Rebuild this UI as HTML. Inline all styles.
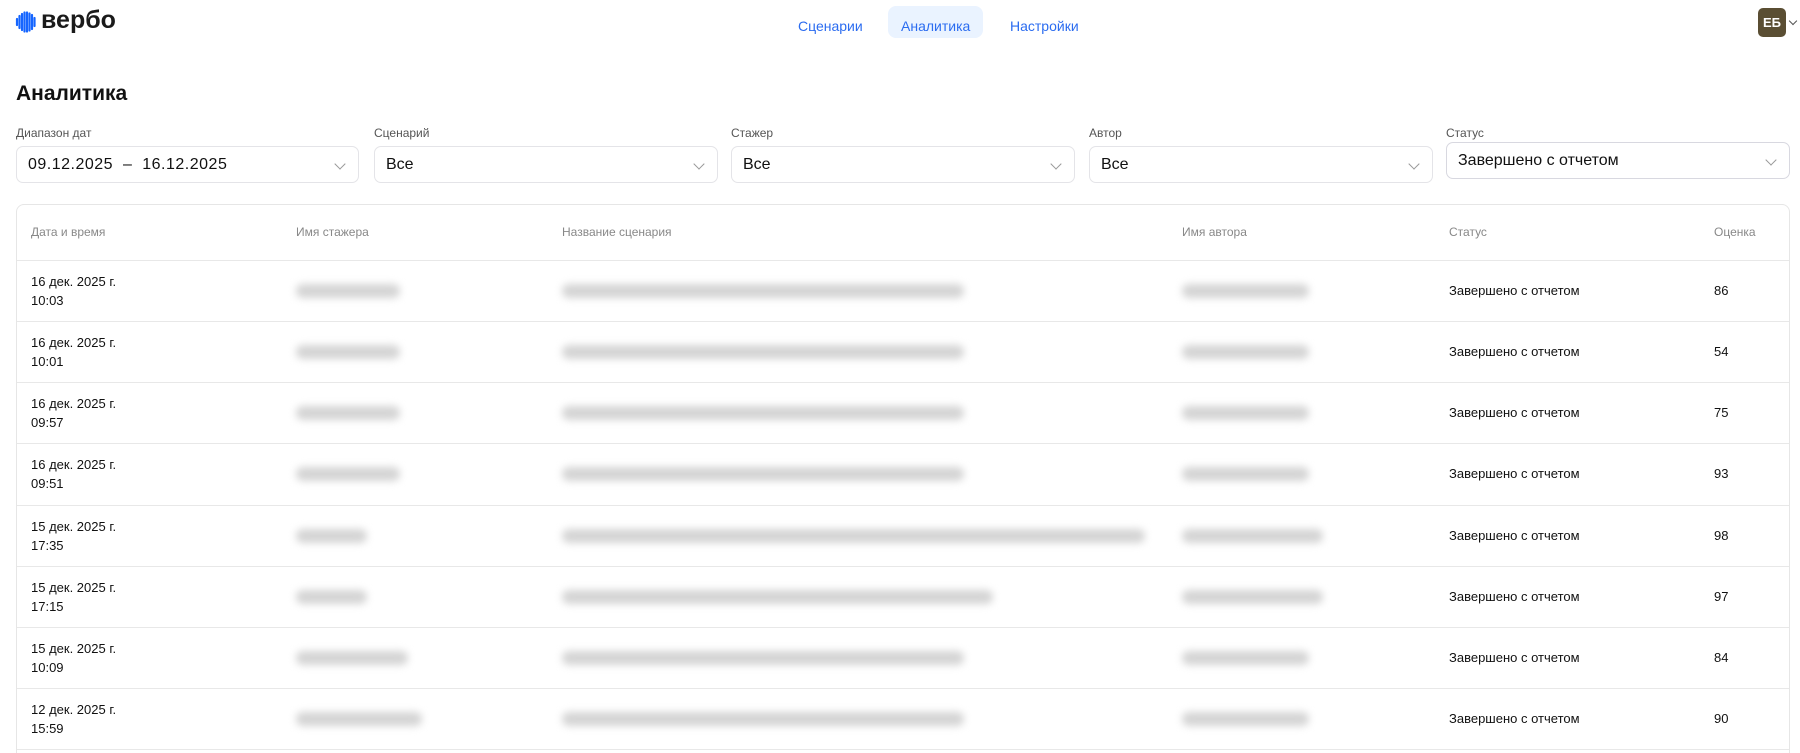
<!DOCTYPE html>
<html><head><meta charset="utf-8"><style>
*{box-sizing:border-box;margin:0;padding:0}
html,body{width:1800px;height:753px;overflow:hidden}
body{background:#fff;font-family:"Liberation Sans",sans-serif;color:#1a1a1a}
#wrap{position:relative;width:1800px;height:753px;overflow:hidden}
.abs{position:absolute}
.nav{font-size:14px;color:#2b6cf0;top:14px;height:24px;line-height:24px}
.pill{background:#eaf3ff;border-radius:8px;left:888px;top:6px;width:95px;height:32px}
h1{position:absolute;left:16px;top:82px;font-size:21px;font-weight:bold;color:#111}
.lbl{position:absolute;top:126px;font-size:12px;color:#555}
.inp{position:absolute;top:146px;height:37px;border:1px solid #e4e4e8;border-radius:7px;font-size:16px;padding-left:11px;line-height:35px;color:#111}
.chev{position:absolute;right:14px;top:13px;width:8px;height:8px;border-right:1px solid #999;border-bottom:1px solid #999;transform:rotate(45deg)}
.table{position:absolute;left:16px;top:204px;width:1774px;height:600px;border:1px solid #e6e6e6;border-radius:8px}
.th{position:absolute;top:225px;font-size:12px;color:#888}
.line{position:absolute;left:17px;width:1772px;height:1px;background:#e8e8e8}
.td{position:absolute;font-size:13px;color:#111;line-height:19px}
.blur{position:absolute;height:14px;background:#d4d4d4;filter:blur(4px);border-radius:7px}
</style></head><body><div id="wrap">
<svg class="abs" style="left:15px;top:11px" width="22" height="22" viewBox="0 0 22 22">
<g stroke="#1565ff" stroke-width="2.2" stroke-linecap="round">
<line x1="2" y1="8" x2="2" y2="14"/><line x1="4.5" y1="5" x2="4.5" y2="17"/><line x1="7" y1="3" x2="7" y2="19"/><line x1="9.5" y1="1.5" x2="9.5" y2="20.5"/><line x1="12" y1="1.5" x2="12" y2="20.5"/><line x1="14.5" y1="2.5" x2="14.5" y2="19.5"/><line x1="17" y1="4" x2="17" y2="18"/><line x1="19.5" y1="7" x2="19.5" y2="15"/></g></svg>
<div class="abs" style="left:41px;top:6px;font-size:25px;font-weight:bold;color:#1a1a1a">вербо</div>
<div class="abs pill"></div>
<div class="abs nav" style="left:798px">Сценарии</div>
<div class="abs nav" style="left:901px">Аналитика</div>
<div class="abs nav" style="left:1010px">Настройки</div>
<div class="abs" style="left:1758px;top:8px;width:28px;height:29px;background:#5a4e33;border-radius:5px;color:#fff;font-size:13px;font-weight:bold;text-align:center;line-height:29px">ЕБ</div>
<div class="abs" style="left:1790px;top:18px;width:6px;height:6px;border-right:1px solid #555;border-bottom:1px solid #555;transform:rotate(45deg)"></div>
<h1>Аналитика</h1>
<div class="lbl" style="left:16px">Диапазон дат</div>
<div class="lbl" style="left:374px">Сценарий</div>
<div class="lbl" style="left:731px">Стажер</div>
<div class="lbl" style="left:1089px">Автор</div>
<div class="lbl" style="left:1446px">Статус</div>
<div class="inp" style="left:16px;width:343px;letter-spacing:0.5px">09.12.2025 &nbsp;–&nbsp; 16.12.2025<div class="chev"></div></div>
<div class="inp" style="left:374px;width:344px">Все<div class="chev"></div></div>
<div class="inp" style="left:731px;width:344px">Все<div class="chev"></div></div>
<div class="inp" style="left:1089px;width:344px">Все<div class="chev"></div></div>
<div class="inp" style="left:1446px;width:344px;top:142px;border-color:#d8d8e0">Завершено с отчетом<div class="chev"></div></div>
<div class="table"></div>
<div class="th" style="left:31px">Дата и время</div>
<div class="th" style="left:296px">Имя стажера</div>
<div class="th" style="left:562px">Название сценария</div>
<div class="th" style="left:1182px">Имя автора</div>
<div class="th" style="left:1449px">Статус</div>
<div class="th" style="left:1714px">Оценка</div>
<div class="line" style="top:260px"></div>
<div class="line" style="top:321px"></div>
<div class="line" style="top:382px"></div>
<div class="line" style="top:443px"></div>
<div class="line" style="top:505px"></div>
<div class="line" style="top:566px"></div>
<div class="line" style="top:627px"></div>
<div class="line" style="top:688px"></div>
<div class="line" style="top:749px"></div>

<div class="td" style="left:31px;top:272px">16 дек. 2025 г.<br>10:03</div>
<div class="blur" style="left:296px;top:284px;width:104px"></div><div class="blur" style="left:562px;top:284px;width:402px"></div><div class="blur" style="left:1182px;top:284px;width:127px"></div>
<div class="td" style="left:1449px;top:281px">Завершено с отчетом</div><div class="td" style="left:1714px;top:281px">86</div>

<div class="td" style="left:31px;top:333px">16 дек. 2025 г.<br>10:01</div>
<div class="blur" style="left:296px;top:345px;width:104px"></div><div class="blur" style="left:562px;top:345px;width:402px"></div><div class="blur" style="left:1182px;top:345px;width:127px"></div>
<div class="td" style="left:1449px;top:342px">Завершено с отчетом</div><div class="td" style="left:1714px;top:342px">54</div>

<div class="td" style="left:31px;top:394px">16 дек. 2025 г.<br>09:57</div>
<div class="blur" style="left:296px;top:406px;width:104px"></div><div class="blur" style="left:562px;top:406px;width:402px"></div><div class="blur" style="left:1182px;top:406px;width:127px"></div>
<div class="td" style="left:1449px;top:403px">Завершено с отчетом</div><div class="td" style="left:1714px;top:403px">75</div>

<div class="td" style="left:31px;top:455px">16 дек. 2025 г.<br>09:51</div>
<div class="blur" style="left:296px;top:467px;width:104px"></div><div class="blur" style="left:562px;top:467px;width:402px"></div><div class="blur" style="left:1182px;top:467px;width:127px"></div>
<div class="td" style="left:1449px;top:464px">Завершено с отчетом</div><div class="td" style="left:1714px;top:464px">93</div>

<div class="td" style="left:31px;top:517px">15 дек. 2025 г.<br>17:35</div>
<div class="blur" style="left:296px;top:529px;width:71px"></div><div class="blur" style="left:562px;top:529px;width:583px"></div><div class="blur" style="left:1182px;top:529px;width:141px"></div>
<div class="td" style="left:1449px;top:526px">Завершено с отчетом</div><div class="td" style="left:1714px;top:526px">98</div>

<div class="td" style="left:31px;top:578px">15 дек. 2025 г.<br>17:15</div>
<div class="blur" style="left:296px;top:590px;width:71px"></div><div class="blur" style="left:562px;top:590px;width:431px"></div><div class="blur" style="left:1182px;top:590px;width:141px"></div>
<div class="td" style="left:1449px;top:587px">Завершено с отчетом</div><div class="td" style="left:1714px;top:587px">97</div>

<div class="td" style="left:31px;top:639px">15 дек. 2025 г.<br>10:09</div>
<div class="blur" style="left:296px;top:651px;width:112px"></div><div class="blur" style="left:562px;top:651px;width:402px"></div><div class="blur" style="left:1182px;top:651px;width:127px"></div>
<div class="td" style="left:1449px;top:648px">Завершено с отчетом</div><div class="td" style="left:1714px;top:648px">84</div>

<div class="td" style="left:31px;top:700px">12 дек. 2025 г.<br>15:59</div>
<div class="blur" style="left:296px;top:712px;width:126px"></div><div class="blur" style="left:562px;top:712px;width:402px"></div><div class="blur" style="left:1182px;top:712px;width:127px"></div>
<div class="td" style="left:1449px;top:709px">Завершено с отчетом</div><div class="td" style="left:1714px;top:709px">90</div>
</div></body></html>
